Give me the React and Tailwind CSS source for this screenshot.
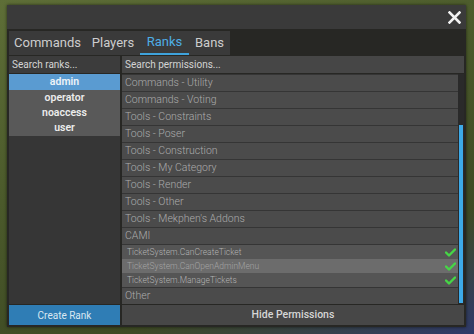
import React from "react";

const categories = [
  "Commands - Utility",
  "Commands - Voting",
  "Tools - Constraints",
  "Tools - Poser",
  "Tools - Construction",
  "Tools - My Category",
  "Tools - Render",
  "Tools - Other",
  "Tools - Mekphen's Addons",
  "CAMI",
];

const tickets = [
  { name: "TicketSystem.CanCreateTicket", hl: false },
  { name: "TicketSystem.CanOpenAdminMenu", hl: true },
  { name: "TicketSystem.ManageTickets", hl: false },
];

function Check() {
  return (
    <svg width="11" height="9" viewBox="0 0 11 9" className="shrink-0">
      <polyline points="1,4.5 4,7.5 10,1.5" fill="none" stroke="#46d646" strokeWidth="2.4" strokeLinecap="round" strokeLinejoin="round" />
    </svg>
  );
}

export default function App() {
  return (
    <div
      className="w-[474px] h-[334px] overflow-hidden pt-[5px] pl-[7px] bg-[linear-gradient(160deg,#5e6e37_0%,#4b5a2b_40%,#3e4a24_75%,#2f3a6a_100%)]"
      style={{ fontFamily: "Roboto, 'Noto Sans', sans-serif" }}
    >
      <div className="w-[459px] h-[322px] flex flex-col bg-[#272724] shadow-[0_0_3px_rgba(0,0,0,0.6)]">
        {/* title bar */}
        <div className="h-[24px] shrink-0 bg-[#3a3a3a] flex items-center justify-end pr-[5px]">
          <svg width="13" height="13" viewBox="0 0 13 13">
            <path d="M1.5 1.5 L11.5 11.5 M11.5 1.5 L1.5 11.5" stroke="#f2f2f2" strokeWidth="2.6" strokeLinecap="square" />
          </svg>
        </div>
        {/* body */}
        <div className="flex-1 flex flex-col px-[2px] pb-[2px]">
          {/* tabs */}
          <div className="mt-[2px] h-[24px] w-[221px] bg-[#3a3a3a] flex text-[13px] text-[#cdcdcd]">
            <div className="w-[77px] flex items-center justify-center">Commands</div>
            <div className="w-[54px] flex items-center justify-center">Players</div>
            <div className="w-[49px] flex items-center justify-center text-[#4eaee6] border-b-2 border-[#3fa3dc]">Ranks</div>
            <div className="w-[41px] flex items-center justify-center">Bans</div>
          </div>
          {/* content */}
          <div className="mt-[1px] flex-1 flex gap-[2px]">
            {/* left column */}
            <div className="w-[111px] flex flex-col gap-[1px]">
              <div className="h-[17px] bg-[#3c3c3c] flex items-center px-[3px] text-[10px] text-[#d4d4d4]">Search ranks...</div>
              <div className="flex-1 bg-[#363636] flex flex-col">
                <div className="h-[16px] bg-[#5a9bd1] flex items-center justify-center text-[10.5px] font-semibold text-[#eef3f8]">admin</div>
                <div className="h-[15px] bg-[#595959] flex items-center justify-center text-[10.5px] font-semibold text-[#ececec]">operator</div>
                <div className="h-[15px] bg-[#595959] flex items-center justify-center text-[10.5px] font-semibold text-[#ececec]">noaccess</div>
                <div className="h-[16px] bg-[#595959] flex items-center justify-center text-[10.5px] font-semibold text-[#ececec]">user</div>
              </div>
              <div className="h-[20px] bg-[#2f7db5] flex items-center justify-center text-[10px] text-[#dbe8f2]">Create Rank</div>
            </div>
            {/* right column */}
            <div className="flex-1 flex flex-col gap-[1px]">
              <div className="h-[17px] bg-[#464646] flex items-center px-[3px] text-[10px] text-[#d4d4d4]">Search permissions...</div>
              <div className="h-[230px] flex bg-[#353535]">
                <div className="flex-1 flex flex-col pt-[1px]">
                  {categories.map((c) => (
                    <div key={c} className="h-[17px] border-b border-[#353535] bg-[#4b4b4b] flex items-center px-[3px] text-[10.5px] font-light text-[#acacac]">
                      {c}
                    </div>
                  ))}
                  {tickets.map((t) => (
                    <div
                      key={t.name}
                      className={`h-[14px] flex items-center justify-between pl-[5px] pr-[2px] text-[8.5px] font-light ${t.hl ? "bg-[#6c6c6c] text-[#a4a4a4]" : "bg-[#555555] text-[#b4b4b4]"}`}
                    >
                      <span>{t.name}</span>
                      <Check />
                    </div>
                  ))}
                  <div className="mt-[1px] h-[16px] bg-[#4b4b4b] flex items-center px-[3px] text-[10.5px] font-light text-[#acacac]">Other</div>
                </div>
                <div className="w-[6px] bg-[#2a2a2a] flex flex-col pt-[51px] pl-[1px] pb-[1px]">
                  <div className="flex-1 w-[4px] bg-[#3daae8]" />
                </div>
              </div>
              <div className="h-[20px] bg-[#474747] flex items-center justify-center text-[10.5px] font-medium text-[#d6d6d6]">Hide Permissions</div>
            </div>
          </div>
        </div>
      </div>
    </div>
  );
}
